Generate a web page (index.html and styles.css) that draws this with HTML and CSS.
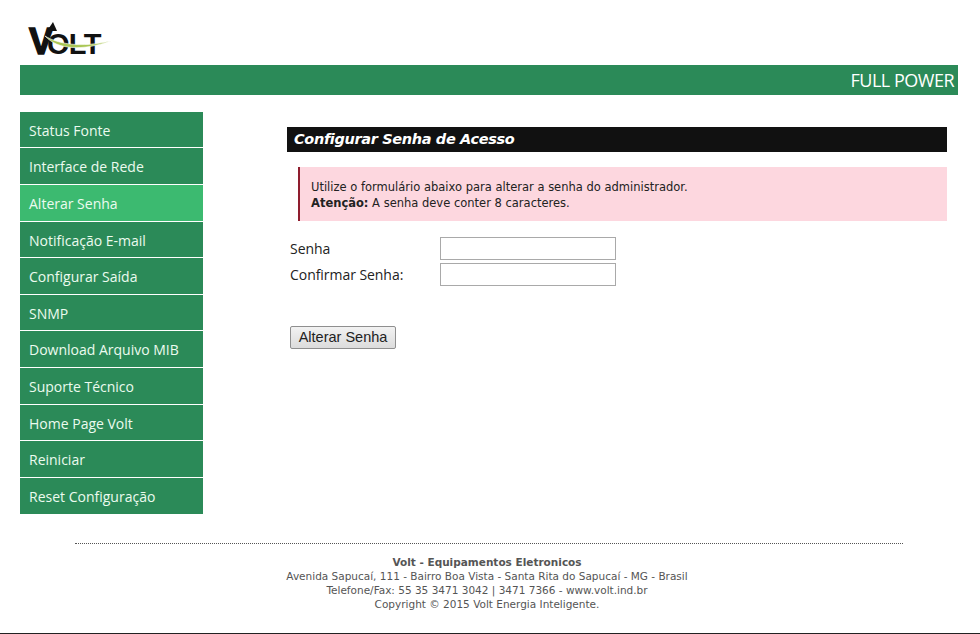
FILE: index.html
```html
<!DOCTYPE html>
<html lang="pt-BR">
<head>
<meta charset="utf-8">
<title>Volt - Configurar Senha de Acesso</title>
<link rel="stylesheet" href="styles.css">
</head>
<body>
<div class="page">
  <header class="header">
    <svg class="logo" width="100" height="59" viewBox="0 0 100 59" role="img" aria-label="Volt">
      <text class="logo-word" x="9" y="48"><tspan class="logo-v">V</tspan><tspan class="logo-rest" dx="-6">OLT</tspan></text>
      <path class="logo-mark" d="M27 25 L33 16 L37 25 Z"/>
      <path class="logo-swoosh" d="M25 30 C38 38 60 42 91 35 C62 45 38 44 25 30 Z"/>
    </svg>
    <div class="bar">FULL POWER</div>
  </header>
  <div class="content">
    <nav class="menu">
      <a href="#">Status Fonte</a>
      <a href="#">Interface de Rede</a>
      <a href="#" class="active">Alterar Senha</a>
      <a href="#">Notificação E-mail</a>
      <a href="#">Configurar Saída</a>
      <a href="#">SNMP</a>
      <a href="#">Download Arquivo MIB</a>
      <a href="#">Suporte Técnico</a>
      <a href="#">Home Page Volt</a>
      <a href="#">Reiniciar</a>
      <a href="#">Reset Configuração</a>
    </nav>
    <main class="main">
      <h1 class="title">Configurar Senha de Acesso</h1>
      <div class="notice">
        Utilize o formulário abaixo para alterar a senha do administrador.<br>
        <strong>Atenção:</strong> A senha deve conter 8 caracteres.
      </div>
      <form class="form">
        <div class="row"><label for="s1">Senha</label><input id="s1" type="password"></div>
        <div class="row"><label for="s2">Confirmar Senha:</label><input id="s2" type="password"></div>
        <button type="button" class="btn">Alterar Senha</button>
      </form>
    </main>
  </div>
  <footer class="footer">
    <div class="footer-text">
      <strong>Volt - Equipamentos Eletronicos</strong><br>
      Avenida Sapucaí, 111 - Bairro Boa Vista - Santa Rita do Sapucaí - MG - Brasil<br>
      Telefone/Fax: 55 35 3471 3042 | 3471 7366 - www.volt.ind.br<br>
      Copyright © 2015 Volt Energia Inteligente.
    </div>
  </footer>
</div>
</body>
</html>
```
FILE: styles.css
```css
html, body {
  margin: 0;
  height: 100%;
  overflow: hidden;
  background: #fff;
}
.page {
  height: 634px;
  box-sizing: border-box;
  border-bottom: 1px solid #222;
  display: flex;
  flex-direction: column;
  font-family: "Open Sans", sans-serif;
}
.header {
  padding: 6px 22px 0 20px;
}
.logo {
  display: block;
}
.logo-word {
  font-family: "Liberation Sans", sans-serif;
  font-weight: 700;
  fill: #111;
}
.logo-v {
  font-size: 36px;
  stroke: #111;
  stroke-width: 1.500px;
}
.logo-rest {
  font-size: 29px;
  letter-spacing: -.7px;
}
.logo-mark {
  fill: #111;
}
.logo-swoosh {
  fill: #a9c653;
  stroke: #fff;
  stroke-width: .6px;
}
.bar {
  height: 30px;
  background: #2b8a58;
  color: #fff;
  font-size: 18px;
  line-height: 30px;
  text-align: right;
  padding-right: 4px;
  letter-spacing: -.5px;
}
.content {
  display: flex;
  padding: 16.750px 0 0 20px;
}
.menu {
  width: 183px;
  display: flex;
  flex-direction: column;
}
.menu a {
  box-sizing: border-box;
  height: 36.600px;
  line-height: 38px;
  padding-left: 9px;
  background: #2b8a58;
  border-bottom: 1px solid #fff;
  color: #ecfbef;
  font-size: 14px;
  text-decoration: none;
}
.menu a:last-child {
  border-bottom: 0;
}
.menu a.active {
  background: #3cba70;
}
.main {
  margin: 15.250px 0 0 84px;
  width: 660px;
}
.title {
  margin: 0;
  height: 25px;
  background: #111;
  color: #fff;
  font: italic 700 14.500px/25px "DejaVu Sans", sans-serif;
  padding-left: 7px;
  letter-spacing: -.35px;
}
.notice {
  margin: 15px 0 0 11px;
  height: 54px;
  box-sizing: border-box;
  padding: 12px 0 0 11px;
  background: #fdd7df;
  border-left: 2px solid #8f1d2e;
  color: #222;
  font: 11.500px/16px "DejaVu Sans", sans-serif;
}
.notice strong {
  font-weight: 700;
}
.form {
  padding: 16px 0 0 3px;
}
.row {
  display: flex;
  align-items: center;
  height: 23px;
  margin-bottom: 3px;
  font-size: 14px;
  letter-spacing: -.05px;
  color: #222;
}
.row label {
  width: 150px;
}
.row input {
  width: 176px;
  height: 23px;
  box-sizing: border-box;
  border: 1px solid #a9a9a9;
  background: #fff;
  padding: 0 3px;
}
.btn {
  display: block;
  margin-top: 40px;
  width: 106px;
  height: 23px;
  padding: 0 0 1px;
  border: 1px solid #8f8f8f;
  border-radius: 2px;
  background: linear-gradient(#f2f2f2, #dcdcdc);
  color: #222;
  font: 14.500px "Liberation Sans", sans-serif;
}
.footer {
  margin: auto 77px 0 75px;
  border-top: 1px dotted #555;
  padding: 11px 0 22px;
}
.footer-text {
  text-align: center;
  width: 824px;
  color: #555;
  font: 10.500px/14px "DejaVu Sans", sans-serif;
}
```
